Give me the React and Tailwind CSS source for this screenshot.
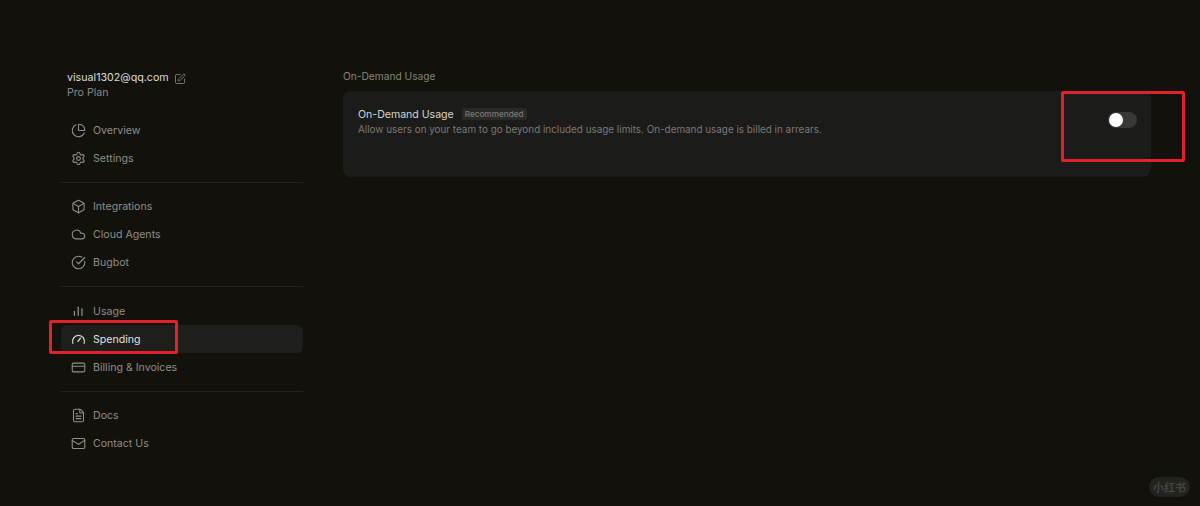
import React from 'react';
import { ChartPie, Settings, Box, Cloud, CircleCheckBig, CreditCard, FileText, Mail, SquarePen } from 'lucide-react';

function SpendingIcon({ size = 15, className = '' }) {
  return (
    <svg width={size} height={size} viewBox="0 0 24 24" fill="none" stroke="currentColor" strokeWidth="2.1" strokeLinecap="round" className={className}>
      <path d="M3 18A9.5 9.5 0 1 1 21 18" />
      <path d="M11 15l4-5" />
    </svg>
  );
}

function UsageIcon({ size = 15, className = '' }) {
  return (
    <svg width={size} height={size} viewBox="0 0 24 24" fill="none" stroke="currentColor" strokeWidth="2.1" strokeLinecap="round" className={className}>
      <path d="M5.5 18v-6" />
      <path d="M11.5 18V5" />
      <path d="M17.5 18V8" />
    </svg>
  );
}

const groups = [
  {
    spacing: '',
    items: [
      { label: 'Overview', icon: ChartPie },
      { label: 'Settings', icon: Settings },
    ],
  },
  {
    spacing: 'mt-[10px] pt-[9px] border-t',
    items: [
      { label: 'Integrations', icon: Box },
      { label: 'Cloud Agents', icon: Cloud },
      { label: 'Bugbot', icon: CircleCheckBig },
    ],
  },
  {
    spacing: 'mt-[10px] pt-[10px] border-t',
    items: [
      { label: 'Usage', icon: UsageIcon },
      { label: 'Spending', icon: SpendingIcon, active: true },
      { label: 'Billing & Invoices', icon: CreditCard },
    ],
  },
  {
    spacing: 'mt-[10px] pt-[9px] border-t',
    items: [
      { label: 'Docs', icon: FileText },
      { label: 'Contact Us', icon: Mail },
    ],
  },
];

function NavRow({ label, icon: Icon, active }) {
  return (
    <div className={`flex items-center h-[28px] pl-[10px] gap-[7px] rounded-md ${active ? 'bg-[#1e1e1b] text-[#e2e2de]' : 'text-[#8f8e88]'}`}>
      <Icon size={15} strokeWidth={1.7} className={active ? 'text-[#d8d8d4]' : 'text-[#918f8a]'} />
      <span className="text-[10.6px] leading-none pt-[2px]">{label}</span>
    </div>
  );
}

export default function App() {
  return (
    <div className="relative w-[1200px] h-[506px] overflow-hidden bg-[#12110b] font-['Inter','Liberation_Sans',sans-serif]">
      <div className="flex pt-[70px] pl-[61px]">
        {/* Sidebar */}
        <aside className="w-[242px] shrink-0 pt-[1px]">
          <div className="pl-[6px] pb-[15px]">
            <div className="flex items-center gap-[5px] h-[15px] text-[#dcdcd8] text-[10.7px] leading-none">
              <span>visual1302@qq.com</span>
              <SquarePen size={12} strokeWidth={1.6} className="text-[#8f8e88]" />
            </div>
            <div className="h-[15px] flex items-center text-[#8a8984] text-[10.6px] leading-none">Pro Plan</div>
          </div>
          {groups.map((group, i) => (
            <div key={i} className={`border-[#23231f] ${group.spacing}`}>
              {group.items.map((item) => (
                <NavRow key={item.label} {...item} />
              ))}
            </div>
          ))}
        </aside>

        {/* Main */}
        <main className="ml-[40px] w-[808px]">
          <div className="h-[13px] flex items-center text-[#85847e] text-[10.2px] leading-none">On-Demand Usage</div>
          <div className="mt-[8px] h-[86px] rounded-lg bg-[#1b1b19] pl-[15px] pr-[14px] pt-[16px] flex justify-between items-start">
            <div>
              <div className="flex items-center gap-[8px] h-[14px]">
                <span className="text-[#d6d6d2] text-[10.56px] leading-none pt-[2px]">On-Demand Usage</span>
                <span className="px-[3px] h-[12px] flex items-center rounded-[2px] bg-[#2a2a27] text-[#7b7a75] text-[8.2px] font-medium leading-none">Recommended</span>
              </div>
              <p className="mt-[1px] text-[#7b7a75] text-[9.9px] leading-[15px]">
                Allow users on your team to go beyond included usage limits. On-demand usage is billed in arrears.
              </p>
            </div>
            <div className="w-[29px] h-[16px] mt-[5px] rounded-full bg-[#383836] flex items-center pl-[1px]">
              <div className="w-[14px] h-[14px] rounded-full bg-white" />
            </div>
          </div>
        </main>
      </div>

      {/* Red annotations */}
      <div className="absolute left-[49px] top-[320px] w-[129px] h-[34px] border-[3px] border-[#e3212a] rounded-[2px]" />
      <div className="absolute left-[1061px] top-[91px] w-[124px] h-[71px] border-[3px] border-[#e3212a] rounded-[2px]" />

      {/* Watermark */}
      <div className="absolute left-[1149px] top-[477px] w-[41px] h-[20px] rounded-full bg-[#22221e] flex items-center justify-center text-[#45443e] text-[11px] font-['Noto_Sans_CJK_SC',sans-serif] font-bold leading-none">
        小红书
      </div>
    </div>
  );
}
